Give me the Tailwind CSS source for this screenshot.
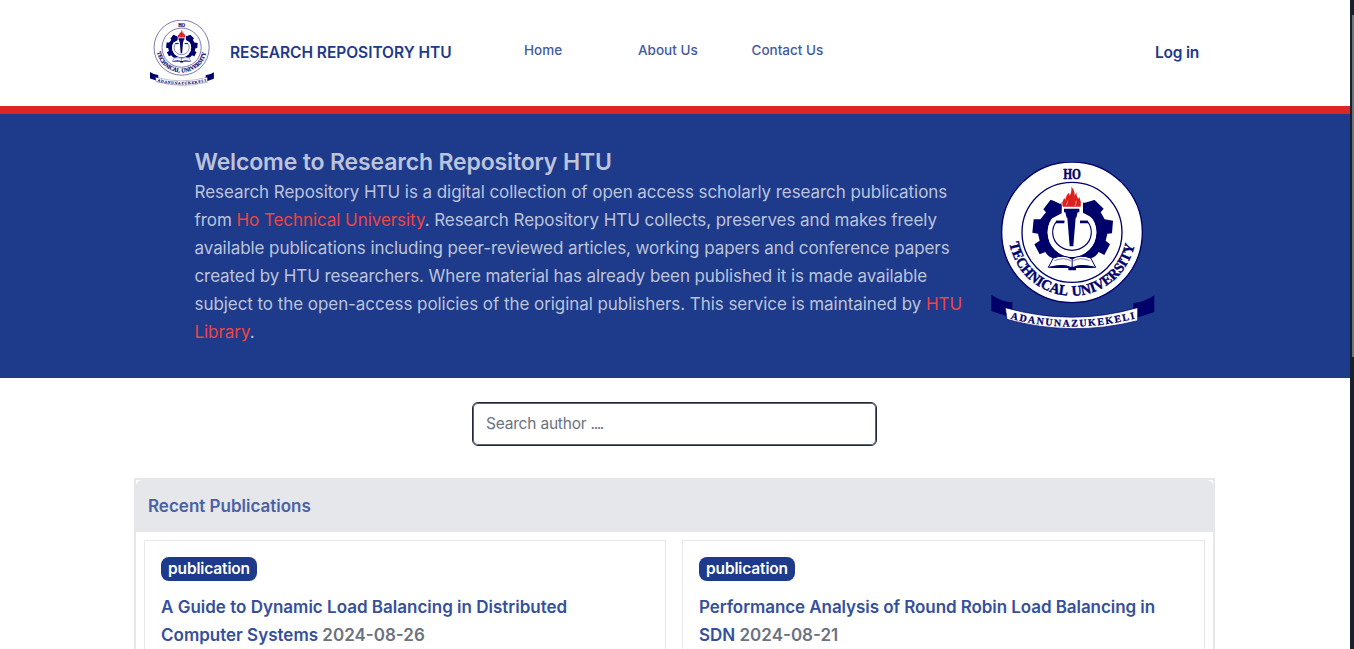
<!DOCTYPE html>
<html lang="en"><head><meta charset="utf-8"><title>Research Repository HTU</title>
<script src="https://cdn.jsdelivr.net/npm/@tailwindcss/browser@4"></script></head>
<body class="relative h-[649px] overflow-hidden bg-white font-['Inter',sans-serif] text-[#1e3a8a]">
<svg class="hidden"><symbol id="crest" viewBox="33 36 490 504">
<circle cx="275" cy="247" r="211" fill="#fff" stroke="#00006b" stroke-width="4"/>
<circle cx="275" cy="247" r="150" fill="#fff" stroke="#00006b" stroke-width="4"/>
<path fill="#00006b" d="M245 153 240 163 211 149 189 178 197 187 180 208 160 208 156 248 173 251 178 272 162 283 178 313 195 306Q205 325 230 327L320 327Q345 325 355 306L372 315 389 283 376 272 381 251 395 250 398 212 373 208 361 187 370 176 343 150 312 163 307 153V184Q348 203 348 248A73 73 0 0 1 202 248Q202 203 245 184Z"/>
<circle cx="275" cy="247" r="73" fill="#fff"/>
<path fill="#fff" d="M243 150H308V200H243Z"/>
<path fill="#00006b" d="M216 151 244 164V190L216 205ZM308 160 343 150V207L308 188Z"/>
<path d="M252 214H229A58 54 0 1 0 321 214H299" fill="none" stroke="#00006b" stroke-width="3.5"/>
<path d="M227 216H252M299 216H323" stroke="#00006b" stroke-width="7"/>
<path fill="#00006b" d="M251 176H297V187H292L288 203H286L279 289H268L261 203H259L255 187H251Z"/>
<path fill="#dc2020" d="M247 170Q243 154 253 144L255 151Q257 134 266 128L267 137Q275 127 273 110Q286 124 282 137L289 127Q287 139 294 146L297 141Q304 155 301 170Z"/>
<path d="M258 166Q262 156 262 152M284 168Q289 160 287 152" fill="none" stroke="#fff" stroke-width="1.5"/>
<path fill="#fff" stroke="#00006b" stroke-width="3" d="M204 352 219 324Q250 312 275 327 300 312 331 324L346 352Q300 341 275 354 250 341 204 352Z"/>
<path fill="#00006b" d="M202 354Q250 338 268 350H282Q300 338 348 354H287V361H264V354ZM274 326h3v28h-3z"/>
<path d="M222 332Q250 320 272 333M278 333Q300 320 328 332" fill="none" stroke="#00006b" stroke-width="1.5"/>
<text x="275" y="87" text-anchor="middle" textLength="53" lengthAdjust="spacingAndGlyphs" fill="#00006b" stroke="#00006b" stroke-width="1.5" class="font-['Liberation_Serif',serif] text-[44px] font-bold">HO</text>
<path id="arc" d="M87.500 280A191 191 0 0 0 463.500 280" fill="none"/>
<text fill="#00006b" stroke="#00006b" stroke-width="1.3" class="font-['Liberation_Serif',serif] text-[44px] font-bold [word-spacing:6px]"><textPath href="#arc" textLength="527" lengthAdjust="spacingAndGlyphs">TECHNICAL UNIVERSITY</textPath></text>
<path fill="#00006b" d="M33 434Q63 455 96 457V500L76 497 33 483ZM522 436Q492 457 459 459V503L479 500 522 486Z"/>
<path fill="#fff" stroke="#00006b" stroke-width="2" d="M75 473Q275 530 472 473V512Q275 562 80 508Z"/>
<path id="band" d="M90 506Q275 554 466 505" fill="none"/>
<text fill="#00006b" stroke="#00006b" stroke-width=".8" class="font-['Liberation_Serif',serif] text-[30px] font-bold"><textPath href="#band" textLength="378" lengthAdjust="spacing">ADANUNAZUKEKELI</textPath></text>
</symbol></svg>
<div class="w-[1350px]">
<header class="flex h-[106px] items-start pl-[150px] pt-5">
<svg class="h-[66px] w-16"><use href="#crest"/></svg>
<a class="ml-4 mt-[21px] w-[294px] whitespace-nowrap text-[15.500px] leading-6 font-semibold tracking-[-0.04px]">RESEARCH REPOSITORY HTU</a>
<nav class="mt-5 flex w-[631px] whitespace-nowrap text-[13.500px] leading-5 font-[450] text-[#3f5a9f]"><a class="w-[114px]">Home</a><a class="w-[113.500px]">About Us</a><a>Contact Us</a></nav>
<a class="mt-[21px] whitespace-nowrap text-[15.500px] leading-6 font-semibold tracking-[-0.2px]">Log in</a>
</header>
<section class="flex h-[272px] border-t-8 border-[#dc2626] bg-[#1e3a8a] pl-[194.500px] pt-8 text-[#bcc4dc]">
<div class="w-[796px] whitespace-nowrap text-[17px] leading-7 tracking-[-0.06px]">
<h1 class="text-[23px] leading-8 font-semibold tracking-[-0.15px]">Welcome to Research Repository HTU</h1>
<p>Research Repository HTU is a digital collection of open access scholarly research publications<br>
from <a class="text-[#ef4444]">Ho Technical University</a>. Research Repository HTU collects, preserves and makes freely<br>
<span class="tracking-[-0.07px]">available publications including peer-reviewed articles, working papers and conference papers</span><br>
<span class="tracking-[-0.1px]">created by HTU researchers. Where material has already been published it is made available</span><br>
subject to the open-access policies of the original publishers. This service is maintained by <a class="text-[#ef4444]">HTU</a><br>
<a class="text-[#ef4444]">Library</a>.</p></div>
<svg class="mt-4 h-[168px] w-[164px]"><use href="#crest"/></svg>
</section>
<div class="ml-[472px] mt-6 flex h-11 w-[405px] items-center rounded-md border border-[#1f2937] px-[13px] text-[15.500px] tracking-[-0.2px] whitespace-pre text-[#6b7280] ring-1 ring-inset ring-[#5b6472]">Search author <span class="tracking-[-1.4px]">....</span></div>
<main class="ml-[134px] mt-8 h-[171px] w-[1081px] overflow-hidden border-2 border-b-0 border-gray-200">
<h2 class="flex h-[52px] items-center rounded-t-md bg-gray-200 px-3 pt-0.5 text-[17px] font-semibold text-[#4a61a1]">Recent Publications</h2>
<div class="flex gap-4 p-2 text-[17px] leading-7 font-semibold text-[#35509a] whitespace-nowrap">
<article class="h-40 w-[522px] border border-gray-200 p-4"><span class="flex h-6 w-24 items-center justify-center rounded-lg bg-[#1e3a8a] text-[15.500px] tracking-[-0.15px] text-white">publication</span><h3 class="mt-3">A Guide to Dynamic Load Balancing in Distributed<br>Computer Systems <span class="text-[#6b7280]">2024-08-26</span></h3></article>
<article class="h-40 w-[523px] border border-gray-200 p-4"><span class="flex h-6 w-24 items-center justify-center rounded-lg bg-[#1e3a8a] text-[15.500px] tracking-[-0.15px] text-white">publication</span><h3 class="mt-3"><span class="tracking-[-0.07px]">Performance Analysis of Round Robin Load Balancing in</span><br>SDN <span class="text-[#6b7280]">2024-08-21</span></h3></article>
</div></main></div>
<div class="absolute right-0 top-0 h-full w-1 bg-[#17212b] pt-[15px]"><div class="ml-0.5 h-[342px] bg-[#6b7280]"></div></div>
</body></html>
